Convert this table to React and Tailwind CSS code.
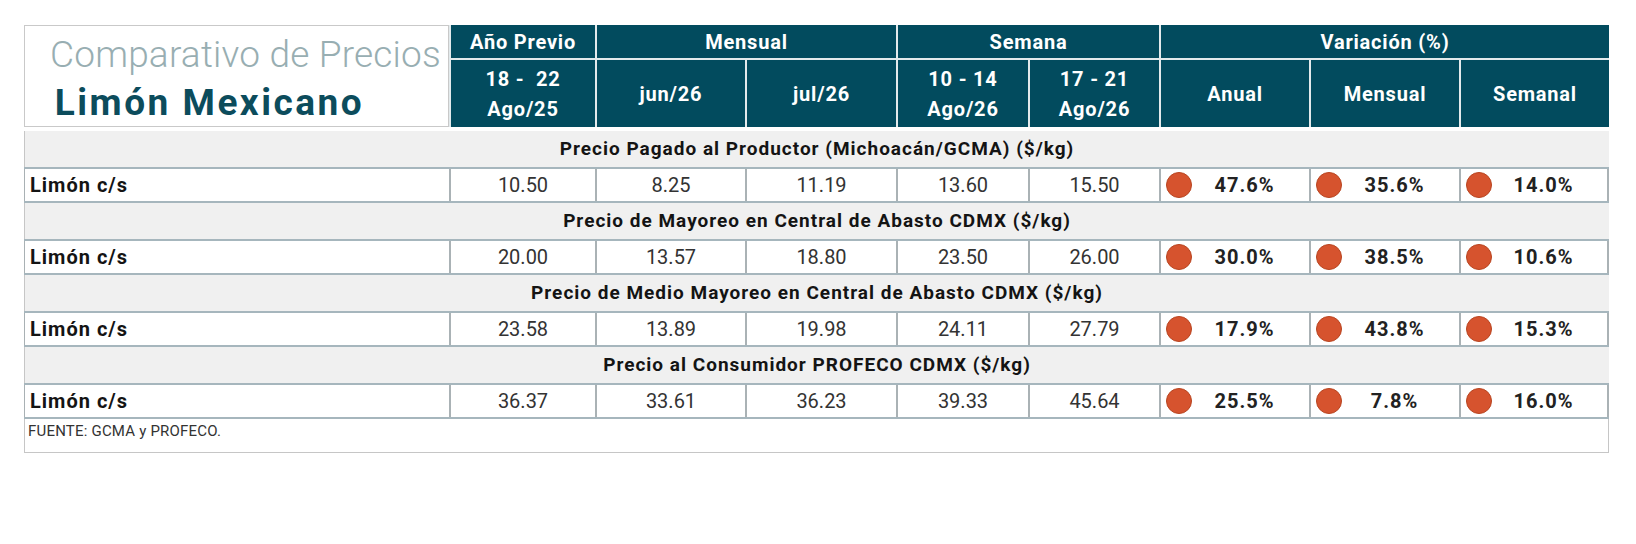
import React from "react";

const COLS = "grid grid-cols-[425px_146px_150px_151px_132px_131px_150px_150px_150px]";

const sections = [
  {
    title: "Precio Pagado al Productor (Michoacán/GCMA) ($/kg)",
    values: ["10.50", "8.25", "11.19", "13.60", "15.50"],
    pct: ["47.6%", "35.6%", "14.0%"],
  },
  {
    title: "Precio de Mayoreo en Central de Abasto CDMX ($/kg)",
    values: ["20.00", "13.57", "18.80", "23.50", "26.00"],
    pct: ["30.0%", "38.5%", "10.6%"],
  },
  {
    title: "Precio de Medio Mayoreo en Central de Abasto CDMX ($/kg)",
    values: ["23.58", "13.89", "19.98", "24.11", "27.79"],
    pct: ["17.9%", "43.8%", "15.3%"],
  },
  {
    title: "Precio al Consumidor PROFECO CDMX ($/kg)",
    values: ["36.37", "33.61", "36.23", "39.33", "45.64"],
    pct: ["25.5%", "7.8%", "16.0%"],
  },
];

function Head({ children, className = "" }) {
  return (
    <div
      className={`bg-[#024b5e] text-white font-bold text-[20px] leading-[30px] tracking-[0.8px] flex flex-col items-center justify-center text-center ${className}`}
    >
      {children}
    </div>
  );
}

function Dot() {
  return (
    <span className="block w-[26px] h-[26px] rounded-full bg-[#d6532e] border border-[#b8441f] shrink-0" />
  );
}

export default function App() {
  return (
    <div className="w-[1636px] h-[544px] bg-white font-[Roboto,sans-serif] pt-[25px] pl-[24px]">
      <div className="w-[1585px]">
        {/* header */}
        <div className={`${COLS} grid-rows-[33px_69px]`}>
          <div className="row-span-2 border border-[#c9c9c9] flex flex-col items-center justify-center pt-[7px]">
            <div className="pl-[18px] text-[37px] leading-[46px] font-light text-[#98aeb2] tracking-[0.2px]">
              Comparativo de Precios
            </div>
            <div className="pr-[54px] text-[37px] leading-[50px] font-bold text-[#0c4c5c] tracking-[2.5px]">
              Limón Mexicano
            </div>
          </div>
          <Head className="border-l-2 border-[#e3eaec]">Año Previo</Head>
          <Head className="col-span-2 border-l-2 border-[#e3eaec]">Mensual</Head>
          <Head className="col-span-2 border-l-2 border-[#e3eaec]">Semana</Head>
          <Head className="col-span-3 border-l-2 border-[#e3eaec]">Variación (%)</Head>
          <Head className="border-l-2 border-t-2 border-[#e3eaec]">
            <span>18 - &nbsp;22</span>
            <span>Ago/25</span>
          </Head>
          <Head className="border-l-2 border-t-2 border-[#e3eaec]">jun/26</Head>
          <Head className="border-l-2 border-t-2 border-[#e3eaec]">jul/26</Head>
          <Head className="border-l-2 border-t-2 border-[#e3eaec]">
            <span>10 - 14</span>
            <span>Ago/26</span>
          </Head>
          <Head className="border-l-2 border-t-2 border-[#e3eaec]">
            <span>17 - 21</span>
            <span>Ago/26</span>
          </Head>
          <Head className="border-l-2 border-t-2 border-[#e3eaec]">Anual</Head>
          <Head className="border-l-2 border-t-2 border-[#e3eaec]">Mensual</Head>
          <Head className="border-l-2 border-t-2 border-[#e3eaec]">Semanal</Head>
        </div>

        {/* body */}
        <div className="mt-[4px]">
          {sections.map((s) => (
            <div key={s.title}>
              <div className="h-[36px] bg-[#f0f0f0] border-l border-[#c6c6c6] flex items-center justify-center text-[19px] font-bold text-[#141414] tracking-[1px]">
                {s.title}
              </div>
              <div className={`${COLS} h-[36px] border-y-2 border-[#a6b6bd] bg-white`}>
                <div className="flex items-center pl-[5px] text-[20px] font-bold text-[#141414] tracking-[1px] border-l border-[#a9b1b4]">
                  Limón c/s
                </div>
                {s.values.map((v, i) => (
                  <div
                    key={i}
                    className="flex items-center justify-center text-[20px] text-[#333333] border-l-2 border-[#aab2b5]"
                  >
                    {v}
                  </div>
                ))}
                {s.pct.map((p, i) => (
                  <div
                    key={i}
                    className={`flex items-center pl-[5px] border-l-2 border-[#aab2b5] ${i === 2 ? "border-r-2" : ""}`}
                  >
                    <Dot />
                    <span className="flex-1 text-center pr-[12px] text-[20px] font-bold text-[#222222] tracking-[1px]">
                      {p}
                    </span>
                  </div>
                ))}
              </div>
            </div>
          ))}
          <div className="h-[34px] border-l border-r border-b border-[#c6c6c6] pl-[3px] pt-[3px] text-[15px] leading-[18px] text-[#333333] tracking-[0.2px]">
            FUENTE: GCMA y PROFECO.
          </div>
        </div>
      </div>
    </div>
  );
}
